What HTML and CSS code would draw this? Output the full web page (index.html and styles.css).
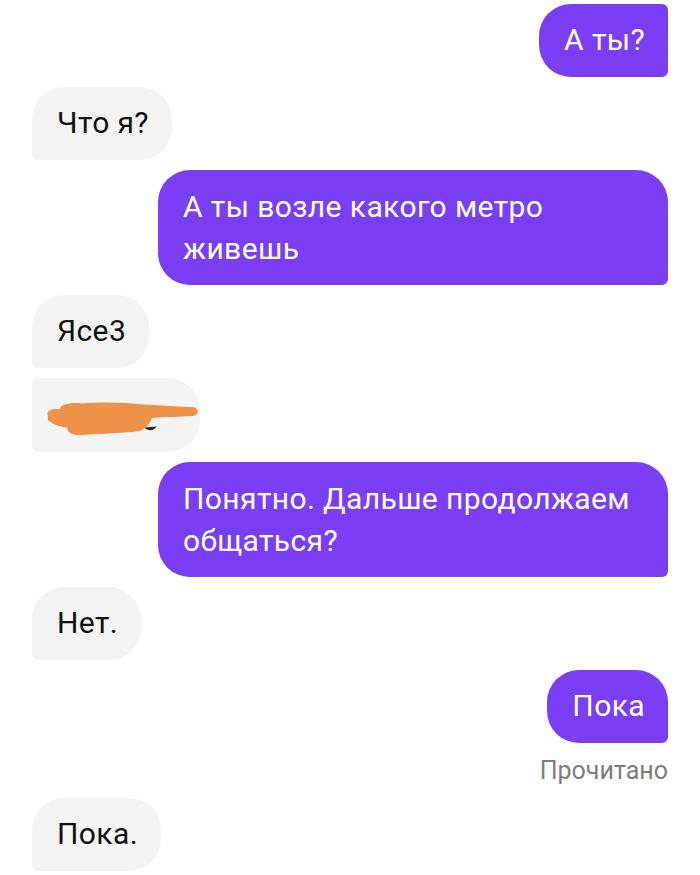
FILE: index.html
```html
<!DOCTYPE html>
<html>
<head>
	<meta charset="utf-8">
	<link rel="stylesheet" href="styles.css">
</head>
<body>
	<div class="chat">
		<div class="msg out group-end"><div class="bubble">А ты?</div></div>
		<div class="msg in"><div class="bubble">Что я?</div></div>
		<div class="msg out"><div class="bubble wide">А ты возле какого метро живешь</div></div>
		<div class="msg in first"><div class="bubble">Ясе3</div></div>
		<div class="msg in next">
			<div class="bubble redacted">
				<!-- scribbled over by hand -->
				<svg class="scribble" width="162" height="44" viewBox="0 0 162 44">
					<path d="M104 35 C108 39 114 39 117 34 Z" fill="#2a2a2a"/>
					<path d="M4 23 C2 17 8 15 16 16 C18 10 30 9 40 10 C60 8 85 9 104 11 C120 12 140 13 156 14 C161 16 161 22 155 23 C140 24 125 24 112 25 C110 31 106 37 98 39 C80 41 55 42 36 43 C28 43 24 39 24 35 C16 35 8 31 4 27 Z" fill="#ef9146"/>
				</svg>
			</div>
		</div>
		<div class="msg out"><div class="bubble wide">Понятно. Дальше продолжаем общаться?</div></div>
		<div class="msg in"><div class="bubble">Нет.</div></div>
		<div class="msg out"><div class="bubble">Пока</div></div>
		<div class="status">Прочитано</div>
		<div class="msg in"><div class="bubble">Пока.</div></div>
	</div>
</body>
</html>
```

FILE: styles.css
```css
html, body {
	margin: 0;
	padding: 0;
	background: #ffffff;
	font-family: Roboto, "Noto Sans", Arial, sans-serif;
}

.chat {
	display: flex;
	flex-direction: column;
	gap: 10px;
	padding: 4px 32px 0 32px;
}

.msg {
	display: flex;
}
.msg.out {
	justify-content: flex-end;
}
.msg.in {
	justify-content: flex-start;
}

.bubble {
	font-size: 30px;
	line-height: 42px;
	letter-spacing: 0.4px;
	padding: 15px 23px 16px 25px;
	border-radius: 32px;
	max-width: 460px;
}
.bubble.wide {
	width: 460px;
	padding: 16px 25px 15px 25px;
}

.out .bubble {
	background: #7a3ef5;
	color: #ffffff;
	border-bottom-right-radius: 6px;
}
.out.group-end .bubble {
	border-top-right-radius: 6px;
}

.in .bubble {
	background: #f4f4f4;
	color: #111111;
	border-bottom-left-radius: 6px;
}
.in.next .bubble {
	border-top-left-radius: 6px;
}

.redacted {
	display: flex;
	align-items: center;
	padding: 15px 0 15px 12px;
	width: 156px;
	height: 44px;
}
.scribble {
	display: block;
}

.status {
	text-align: right;
	color: #7d7d7d;
	font-size: 25px;
	line-height: 35px;
}
```
